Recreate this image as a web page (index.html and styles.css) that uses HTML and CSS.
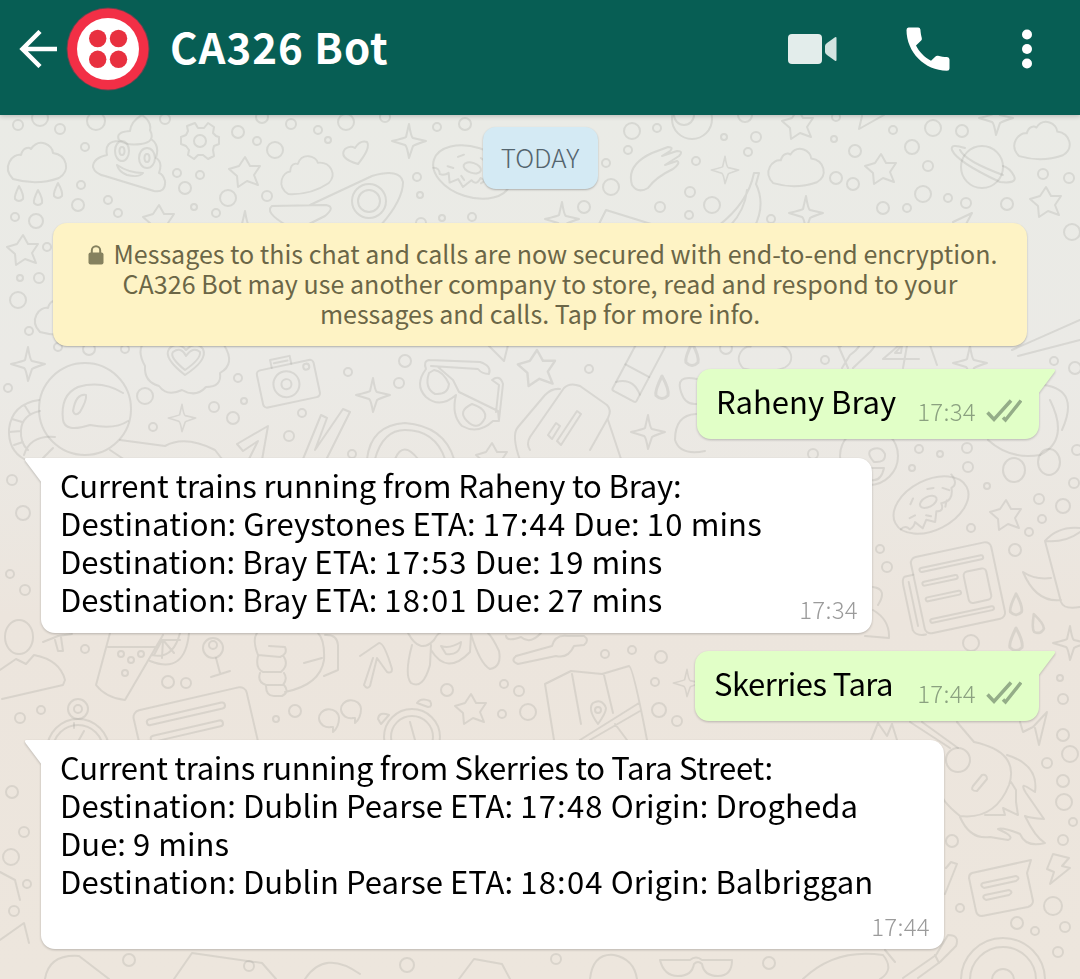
FILE: index.html
```html
<!DOCTYPE html>
<html lang="en">
<head>
<meta charset="utf-8">
<title>CA326 Bot</title>
<link rel="stylesheet" href="styles.css">
</head>
<body>
<div class="app">
<header class="bar">
  <svg class="back" width="38" height="38" viewBox="0 0 38 38"><path d="M21 1.500 3.500 19 21 36.500M3.500 19H38"/></svg>
  <svg class="avatar" width="84" height="84" viewBox="0 0 84 84"><circle cx="42" cy="42" r="41.500" fill="#6a4550"/><circle cx="42" cy="42" r="40.500" fill="#f22f46"/><circle cx="42" cy="42" r="31" fill="#fff"/><g fill="#e8303f"><circle cx="31.700" cy="31.500" r="8.700"/><circle cx="52.500" cy="31.500" r="8.700"/><circle cx="31.700" cy="52.300" r="8.700"/><circle cx="52.500" cy="52.300" r="8.700"/></g></svg>
  <h1 class="name">CA326 Bot</h1>
  <svg class="video" width="50" height="32" viewBox="0 0 50 32"><rect x="1" y="1" width="34" height="30" rx="4" fill="#e3edeb"/><path d="M48 4.200q1.500-.7 1.500.8v22q0 1.500-1.500.8L40 22q-2-1.500-2-3v-6q0-1.500 2-3z" fill="#d3e4e1"/></svg>
  <svg class="phone" width="44" height="44" viewBox="0 0 44 44"><path d="M2.500.5h9.700q2 0 2.200 2c.2 3.200.7 5.800 1.400 8.500q.4 1.500-.6 2.500L10 18.500c3 6 8.200 11.700 15 15.300l4.500-4.300q1-1 2.500-.7c2.800.8 6 1.200 9 1.300q2.500.2 2.500 2.400v9q0 2.300-2.500 2.300C18.500 43.500.5 25 .5 3Q.5.500 2.500.500z" fill="#fff"/></svg>
  <svg class="more" width="12" height="40" viewBox="0 0 12 40"><g fill="#fff"><circle cx="6" cy="5.500" r="5"/><circle cx="6" cy="20" r="5"/><circle cx="6" cy="34.500" r="5"/></g></svg>
</header>
<main class="chat">
<svg class="doodles" viewBox="0 115 1080 864" width="1080" height="864">
  <defs>
    <path id="star" d="M0-15 5-6 15-6 9 3 13 13 2 9-7 15-8 4-16-3-6-6z"/>
    <path id="spark" d="M0-17Q2-4 4-3L17 0Q5 4 4 5L0 17Q-2 5-4 4L-17 0Q-4-3-3-4z"/>
    <path id="cloud" d="M-24 16C-36 4-24-10-16-8-14-16-8-16-6-14 2-26 16-18 16-10 30-8 34 8 22 15Q0 23-24 16z"/>
    <path id="drop" d="M0-8Q-5 2-4 5Q0 9 4 5Q5 1 0-8z"/>
    <g id="donut"><ellipse rx="40" ry="25"/><ellipse cx="-1" cy="-4" rx="9" ry="5"/><path d="M-38 8q6-2 8 4 5 0 8-4l4 9 7-6 7 6 6-9q7 4 8-5 12 4 16-9 8 0 6-12M-18-10l5-4M4-16l6 2M18-10l5 5M16 3l-4 5M-25 2h6M-9 7l4 3"/></g>
    <g id="clock"><circle r="42"/><circle r="33"/><circle r="11"/></g>
    <path id="bolt" d="M-6-15 10-11 3-3 11-1-9 15-5 3-12 0z"/>
  </defs>
  <g class="ink">
    <!-- scattered bubbles -->
    <g>
      <circle cx="18" cy="125" r="5"/><circle cx="40" cy="118" r="8"/><circle cx="60" cy="129" r="5"/><circle cx="96" cy="121" r="9"/><circle cx="85" cy="147" r="4"/><circle cx="165" cy="119" r="5"/><circle cx="238" cy="132" r="6"/><circle cx="257" cy="141" r="4"/><circle cx="275" cy="150" r="8"/><circle cx="262" cy="117" r="6"/><circle cx="291" cy="124" r="5"/><circle cx="318" cy="130" r="4"/><circle cx="328" cy="140" r="3"/><circle cx="346" cy="122" r="8"/><circle cx="385" cy="117" r="5"/><circle cx="437" cy="127" r="4"/><circle cx="465" cy="124" r="6"/><circle cx="177" cy="173" r="4"/><circle cx="200" cy="175" r="4"/><circle cx="185" cy="188" r="6"/><circle cx="81" cy="185" r="4"/><circle cx="78" cy="205" r="6"/><circle cx="108" cy="200" r="4"/><circle cx="118" cy="213" r="4"/><circle cx="228" cy="198" r="8"/><circle cx="267" cy="196" r="5"/><circle cx="194" cy="207" r="3"/><circle cx="216" cy="213" r="4"/><circle cx="15" cy="217" r="4"/><circle cx="417" cy="177" r="4"/><circle cx="420" cy="195" r="3"/><circle cx="421" cy="223" r="5"/><circle cx="442" cy="218" r="3"/><circle cx="472" cy="217" r="4"/>
      <circle cx="632" cy="131" r="8"/><circle cx="657" cy="128" r="4"/><circle cx="628" cy="150" r="4"/><circle cx="606" cy="163" r="4"/><circle cx="696" cy="161" r="4"/><circle cx="724" cy="137" r="3"/><circle cx="756" cy="137" r="5"/><circle cx="748" cy="152" r="4"/><circle cx="834" cy="139" r="3"/><circle cx="855" cy="151" r="6"/><circle cx="893" cy="130" r="4"/><circle cx="933" cy="128" r="8"/><circle cx="912" cy="147" r="7"/><circle cx="962" cy="131" r="6"/><circle cx="928" cy="166" r="5"/><circle cx="836" cy="178" r="6"/><circle cx="853" cy="184" r="6"/><circle cx="611" cy="187" r="8"/><circle cx="584" cy="207" r="6"/><circle cx="660" cy="207" r="5"/><circle cx="690" cy="192" r="5"/><circle cx="712" cy="205" r="8"/><circle cx="689" cy="215" r="4"/><circle cx="771" cy="219" r="4"/><circle cx="883" cy="208" r="6"/><circle cx="907" cy="208" r="4"/><circle cx="923" cy="194" r="8"/><circle cx="948" cy="198" r="4"/><circle cx="966" cy="203" r="5"/><circle cx="1007" cy="204" r="6"/><circle cx="1043" cy="174" r="5"/><circle cx="1069" cy="178" r="5"/><circle cx="836" cy="117" r="4"/><circle cx="745" cy="115" r="7"/><circle cx="1072" cy="232" r="8"/>
      <circle cx="36" cy="221" r="7"/><circle cx="47" cy="247" r="4"/><circle cx="20" cy="278" r="3"/><circle cx="39" cy="278" r="5"/><circle cx="18" cy="300" r="8"/><circle cx="29" cy="331" r="4"/><circle cx="58" cy="347" r="4"/><circle cx="89" cy="349" r="6"/><circle cx="125" cy="349" r="4"/><circle cx="8" cy="388" r="4"/><circle cx="145" cy="396" r="8"/><circle cx="153" cy="427" r="4"/><circle cx="214" cy="407" r="5"/><circle cx="233" cy="418" r="6"/><circle cx="238" cy="378" r="4"/><circle cx="244" cy="401" r="3"/><circle cx="302" cy="413" r="4"/><circle cx="289" cy="436" r="5"/><circle cx="348" cy="372" r="4"/><circle cx="352" cy="454" r="4"/><circle cx="405" cy="361" r="6"/><circle cx="399" cy="383" r="5"/><circle cx="589" cy="369" r="4"/><circle cx="825" cy="360" r="4"/><circle cx="726" cy="348" r="6"/><circle cx="1054" cy="361" r="4"/><circle cx="1075" cy="368" r="6"/>
      <circle cx="919" cy="449" r="4"/><circle cx="940" cy="454" r="3"/><circle cx="967" cy="448" r="5"/><circle cx="968" cy="467" r="5"/><circle cx="912" cy="468" r="3"/><circle cx="987" cy="486" r="3"/><circle cx="1077" cy="450" r="5"/><circle cx="1074" cy="483" r="5"/><circle cx="1039" cy="499" r="5"/><circle cx="1063" cy="506" r="7"/><circle cx="1042" cy="519" r="4"/><circle cx="1029" cy="532" r="4"/><circle cx="971" cy="528" r="4"/><circle cx="1015" cy="550" r="6"/><circle cx="880" cy="549" r="4"/><circle cx="887" cy="567" r="5"/><circle cx="971" cy="643" r="8"/><circle cx="1060" cy="678" r="3"/><circle cx="1063" cy="699" r="5"/><circle cx="813" cy="454" r="5"/>
      <circle cx="85" cy="649" r="4"/><circle cx="168" cy="682" r="6"/><circle cx="186" cy="683" r="5"/><circle cx="20" cy="718" r="5"/><circle cx="41" cy="710" r="4"/><circle cx="276" cy="719" r="3"/><circle cx="295" cy="711" r="6"/><circle cx="447" cy="690" r="6"/><circle cx="504" cy="684" r="4"/><circle cx="519" cy="691" r="5"/><circle cx="502" cy="714" r="4"/><circle cx="528" cy="712" r="8"/><circle cx="605" cy="654" r="4"/><circle cx="632" cy="650" r="4"/><circle cx="661" cy="657" r="6"/><circle cx="655" cy="682" r="4"/><circle cx="659" cy="710" r="7"/><circle cx="677" cy="721" r="5"/>
      <circle cx="1063" cy="735" r="6"/><circle cx="1070" cy="754" r="8"/><circle cx="1047" cy="763" r="5"/><circle cx="1063" cy="781" r="6"/><circle cx="1064" cy="802" r="8"/><circle cx="1073" cy="822" r="4"/><circle cx="1063" cy="840" r="5"/><circle cx="952" cy="841" r="6"/><circle cx="960" cy="908" r="4"/><circle cx="1053" cy="906" r="9"/><circle cx="1017" cy="923" r="6"/><circle cx="1035" cy="931" r="4"/><circle cx="1065" cy="927" r="5"/><circle cx="1058" cy="952" r="5"/><circle cx="12" cy="480" r="5"/><circle cx="23" cy="513" r="7"/><circle cx="10" cy="574" r="4"/><circle cx="25" cy="590" r="5"/><circle cx="12" cy="792" r="6"/><circle cx="24" cy="832" r="5"/><circle cx="11" cy="857" r="8"/><circle cx="27" cy="884" r="4"/><circle cx="14" cy="911" r="5"/><circle cx="129" cy="960" r="6"/><circle cx="249" cy="966" r="5"/><circle cx="407" cy="965" r="7"/><circle cx="556" cy="959" r="5"/><circle cx="769" cy="963" r="6"/>
    </g>
    <!-- stars, sparkles, clouds, drops -->
    <use href="#star" x="245" y="172"/><use href="#star" x="159" y="220"/><use href="#star" x="798" y="124"/><use href="#star" x="881" y="169"/><use href="#star" x="1046" y="202"/><use href="#star" x="23" y="250"/><use href="#star" transform="translate(537 368) scale(1.2)"/><use href="#star" x="492" y="458"/><use href="#star" x="1006" y="515"/><use href="#star" x="471" y="709"/>
    <use href="#spark" x="409" y="141"/><use href="#spark" x="245" y="228"/><use href="#spark" x="562" y="219"/><use href="#spark" transform="translate(725 170) scale(.8)"/><use href="#spark" x="806" y="213"/><use href="#spark" x="996" y="118"/><use href="#spark" x="28" y="364"/><use href="#spark" transform="translate(182 418) scale(.8)"/><use href="#spark" x="373" y="395"/><use href="#spark" x="648" y="432"/><use href="#spark" x="970" y="363"/><use href="#spark" x="1070" y="643"/><use href="#spark" transform="translate(687 683) scale(.8)"/>
    <use href="#cloud" x="37" y="163"/><use href="#cloud" transform="translate(306 175) rotate(-14) scale(.9)"/><use href="#cloud" transform="translate(796 168) scale(.95)"/><use href="#cloud" transform="translate(1042 141) scale(.95)"/><use href="#cloud" transform="translate(64 316)"/><use href="#cloud" transform="translate(765 354) scale(.9)"/>
    <use href="#drop" x="19" y="194"/><use href="#drop" x="38" y="198"/><use href="#drop" x="58" y="191"/><use href="#drop" transform="translate(692 355) scale(1.5)"/><use href="#drop" transform="translate(662 388) scale(1.500)"/><use href="#drop" transform="translate(1016 605) scale(1.400)"/><use href="#drop" transform="translate(1037 624) rotate(-18) scale(1.300)"/><use href="#drop" transform="translate(1016 640) scale(1.500)"/>
    <use href="#donut" transform="translate(472 172) rotate(18)"/><use href="#donut" transform="translate(931 505) rotate(-27)"/>
    <!-- pile with eyes -->
    <path d="M130 131Q131 121 142 115Q152 122 150 130Q156 142 141 144Q126 146 119 140Q115 132 130 131M119 141Q104 141 107 155Q93 158 93 167Q95 174 105 176L154 191Q166 193 165 181Q163 174 159 173Q163 162 156 158Q160 145 151 139M117 165Q129 173 143 173Q139 178 127 175Q119 172 117 165z"/><ellipse cx="122" cy="151" rx="7" ry="10"/><ellipse cx="147" cy="158" rx="8" ry="10"/><ellipse cx="122" cy="151" rx="2.500" ry="4"/><ellipse cx="147" cy="158" rx="2.500" ry="4"/>
    <!-- gear -->
    <circle cx="200" cy="141" r="6"/><path d="M195 123l3 5h6l4-5 6 4-1 6 3 3 3 1v7l-5 2-1 4 1 6-6 3-5-4h-5l-4 4-6-4 1-5-3-4-5-2v-7l5-2 2-4-1-5z"/>
    <path d="M358 164Q338 158 345 149Q350 145 355 148Q360 140 367 142Q371 148 358 164z"/>
    <!-- avocado and halves -->
    <path d="M310 205L372 176Q400 168 403 182Q403 200 381 225M272 206L326 205Q336 207 325 216L305 226M272 206Q264 212 286 225"/><circle cx="369" cy="201" r="17"/><circle cx="369" cy="201" r="11"/>
    <!-- hand, banana, planet -->
    <path d="M632 185Q626 165 652 153L668 147Q674 147 670 151L662 156 677 151Q684 151 679 156L665 165 677 161Q681 163 673 169Q656 177 648 188Q638 194 632 185M718 226Q748 203 754 173H759L756 184Q766 205 754 228M730 226Q745 210 747 190"/>
    <circle cx="982" cy="167" r="21"/><path d="M952 150Q950 143 965 148M952 150Q957 162 1000 182Q1018 184 1014 176Q1010 168 1003 166M960 150Q965 161 1003 175"/>
    <circle cx="692" cy="119" r="20"/><circle cx="684" cy="115" r="10"/><path d="M862 116L859 129 884 115M598 226L606 210 664 228M953 222L972 213 965 226"/>
    <!-- astronaut -->
    <circle cx="85" cy="409" r="46"/><path d="M63 420Q60 395 78 387Q102 380 123 393M63 420Q65 433 90 425Q115 430 128 421M73 411Q76 393 86 395Q87 400 80 412Q75 417 73 411M39 400Q12 404 9 429Q8 450 24 459M40 411Q22 415 21 430Q20 443 28 450M12 419l10 3M9 432l12-1M14 445l9-3M25 406l5 8M24 455Q30 435 55 437M53 448l-10 10M120 440L165 446Q185 435 215 450L222 459M110 450l15 10"/>
    <!-- heart medal -->
    <path d="M145 341Q136 350 145 366Q144 382 159 386Q167 397 182 390Q196 398 206 387Q222 387 220 373Q236 364 224 345M185 375Q163 358 169 349Q177 340 186 350Q196 340 203 349Q208 360 185 375zM185 370Q169 357 173 352Q181 346 186 356Q193 346 200 352Q201 359 185 370z"/>
    <!-- camera -->
    <g transform="rotate(-12 287 382)"><rect x="259" y="365" width="58" height="38" rx="4"/><path d="M275 365v-8h20v8M278 361h14"/><circle cx="286" cy="384" r="13"/><circle cx="286" cy="384" r="5"/><circle cx="309" cy="371" r="3"/></g>
    <path d="M237 444L268 426 262 460M237 444l6 7 15-10-9 18M303 459L321 415 327 418 315 450 343 409 350 412 326 460"/>
    <!-- glasses -->
    <path d="M429 360L480 362Q492 366 489 374Q482 374 478 369L431 366M429 360Q423 361 426 369Q414 385 426 397Q440 409 456 395Q451 415 462 426Q478 435 493 421L499 421 498 411 459 392 453 380 438 367M492 380Q500 374 503 384L499 420M492 380L499 385 496 412M429 373Q424 388 435 394Q448 395 449 384Q443 371 434 370zM472 404Q457 411 467 421Q478 432 485 418Q487 409 472 404z"/>
    <path d="M520 460Q511 435 518 427L545 395Q552 388 560 389M530 450Q526 444 530 437L564 388Q570 382 580 386L607 405Q612 410 608 418L590 450M608 420L621 459M548 435l8-12 4 3-8 13zM557 441L577 411l4 3-20 31z"/>
    <g transform="rotate(28 636 370)"><rect x="624" y="335" width="27" height="64" rx="2"/><path d="M624 370h27M624 390q13-12 27 0"/></g>
    <path d="M367 459Q371 425 405 423Q444 426 454 459M375 459Q383 430 405 430Q435 430 445 459M395 459q8-19 23 0M488 345L504 361 508 345M697 379Q675 374 681 392Q685 405 696 404M696 414Q675 415 675 440Q680 456 705 451M842 368l8-13q14-10 8-15-10-4-18 7M853 368l17-16q8-8 4-12M905 340l-22 19h36M908 340l-5 28M895 353l7-8-1 8zM838 345l10 23M930 345l7 20M1012 350L1080 320M1018 356L1080 340"/>
    <circle cx="869" cy="456" r="29"/><path d="M874 462Q865 452 873 449Q881 446 885 454Q886 463 874 462M869 468h15q-3 14-13 12"/>
    <!-- toy figure -->
    <path d="M1044 385Q1080 390 1062 430M988 440Q1010 460 1040 455Q1070 440 1050 400"/><ellipse cx="1014" cy="470" rx="11" ry="12"/><ellipse cx="1049" cy="462" rx="11" ry="13"/>
    <!-- newspaper -->
    <g transform="rotate(-12 957 588)"><rect x="917" y="549" width="82" height="78" rx="6"/><path d="M917 566h-9q-3 2-3 8v46q2 7 12 7M911 572v45"/><rect x="924" y="561" width="65" height="4" rx="2"/><rect x="924" y="575" width="36" height="4" rx="2"/><rect x="924" y="591" width="36" height="4" rx="2"/><rect x="966" y="574" width="23" height="32" rx="4"/><rect x="924" y="613" width="65" height="4" rx="2"/></g>
    <path d="M1045 541Q1058 526 1080 528M1045 541L1061 602Q1064 610 1080 607M1045 541Q1065 543 1080 532M1051 578Q1035 580 1023 572Q1036 603 1061 600M873 587q15 2 5 18M873 610Q890 620 889 638L865 636"/>
    <!-- lower strip -->
    <ellipse cx="19" cy="637" rx="14" ry="17"/><path d="M0 670L16 659 26 664 34 655Q60 660 65 680L63 685 2 699M43 642l15-6 14-2M55 640l3 11h5l-2-14M110 633L96 685Q106 698 125 700L163 635M108 647h50M150 661Q185 675 189 633M152 655Q173 660 180 633M162 640l-8 15M163 640l11 13M163 640h17M163 640l-1 18"/><circle cx="121" cy="654" r="3"/><circle cx="141" cy="654" r="3"/><circle cx="131" cy="660" r="3"/><circle cx="125" cy="673" r="3"/><circle cx="213" cy="648" r="10"/><circle cx="213" cy="645" r="4"/><path d="M216 658l4 15M211 677l19-6"/>
    <path d="M257 633Q252 640 258 655L280 657Q288 654 285 647L269 646M258 656q-3 12 5 16h18q8-7 3-15M260 673q-3 9 6 12h17q5-6 1-12M266 686q0 10 8 10h8q8-4 2-11M285 692Q320 685 324 660Q325 640 318 633M304 663l18-5M325 635q12-1 13 10v25l-14 6"/>
    <g transform="rotate(-13 195 722)"><rect x="136" y="698" width="116" height="65" rx="7"/><rect x="148" y="709" width="80" height="6" rx="3"/><rect x="148" y="726" width="74" height="6" rx="3"/></g>
    <circle cx="78" cy="750" r="31"/><circle cx="78" cy="750" r="25"/><circle cx="78" cy="709" r="10"/><circle cx="78" cy="709" r="4"/><path d="M84 731l-9 16M74 723v5M331 727a10 9 0 1 1 8-9q0 9-6 14v-5zM353 718a10 9 0 1 1 8-9q0 9-6 14v-5z"/>
    <path d="M360 656L379 643Q384 642 392 669Q392 674 387 672L377 658 370 686Q367 690 364 685L373 658M408 633Q420 655 434 640Q438 633 440 633M412 645Q404 675 411 683Q423 690 430 665L431 645M431 650Q447 676 470 652L471 634Q480 664 490 669Q502 667 499 651Q493 638 488 633M441 646Q450 649 461 642Q460 656 446 654zM506 636Q507 642 521 637Q530 645 541 633M516 656L552 646Q555 634 568 636L584 636Q590 640 584 645L574 646Q568 659 556 656L518 664Q510 661 516 656"/>
    <circle cx="412" cy="737" r="28"/><circle cx="412" cy="737" r="21"/><path d="M410 722l5 18M417 703q4-6 13-2 3 6-2 6zM378 719q1-8 11-4l-8 9zM554 740L545 684 571 671 602 674 629 666Q633 667 647 740M572 674l9 50M604 675l9 38M580 740L639 703M590 740L640 711M615 724l12 16"/><path d="M598 724Q587 709 593 703Q602 698 606 708Q606 713 598 724z"/><circle cx="598" cy="710" r="3"/>
    <!-- guitar and flames -->
    <circle cx="958" cy="760" r="12"/><path d="M871 740l7-17 9 13 5-12 5 16M910 722L950 748M922 722L958 748M957 722L974 742Q1020 752 1009 785Q995 820 960 816Q940 800 940 790M1007 755Q1039 765 1035 792L1027 787Q1020 783 1026 793L1044 819Q1030 818 1025 816M1011 782L1016 790V802L1018 815 1003 808 1005 815 985 815M960 817Q970 840 990 837L1008 840Q1014 838 1006 833L998 829Q1003 827 1020 834Q1026 848 1045 843Q1035 837 1025 816M973 786l9-11q5-1 5 4l-10 12q-7 0-4-5"/>
    <use href="#bolt" x="1059" y="869"/><path d="M1020 722l3 10 10-5 14-15-8 33-4-17"/>
    <path d="M972 873L1022 862 1031 860 1027 873 1033 901Q1033 905 1028 907L982 916Q977 916 976 911L969 878Q969 874 972 873zM983 883l33-7q5 2 0 5l-32 7q-5-3-1-5zM985 895l24-5q5 2 0 5l-23 5q-5-3-1-5zM946 868l5-6 6 2-12 30"/>
    <use href="#clock" x="1003" y="980"/><path d="M903 978L936 955 948 935Q960 935 956 946L940 962 918 978M935 955l4 8M885 950l10 12M0 872l15 8 5 20M0 940l24-17 5 20M45 979q4-25 34-23l30 23M174 979l18-26 70 10 14 16M305 979q20-30 55-5M459 979l15-20 28 5 8 15M590 979q3-26 24-24 20 4 23 24"/><path d="M660 960h30q6-5 12 0h30q0 16-14 16t-16-12q-4-4-8 0-2 12-16 12t-18-16M803 979q32-31 80-24Q895 970 880 979"/>
  </g>
</svg>
<div class="day"><span>TODAY</span></div>
<div class="notice">
  <p class="n1"><svg class="lock" width="16" height="20" viewBox="0 0 16 20"><path d="M3.800 8V5.500a4.200 4.200 0 0 1 8.400 0V8" fill="none" stroke="#85815f" stroke-width="2"/><rect x=".5" y="7.500" width="15" height="12" rx="2" fill="#85815f"/></svg><span>Messages to this chat and calls are now secured with end-to-end encryption.</span></p>
  <p class="n2">CA326 Bot may use another company to store, read and respond to your</p>
  <p class="n3">messages and calls. Tap for more info.</p>
</div>
<div class="msg out first">
  <svg class="tail" width="18" height="30" viewBox="0 0 18 30"><path d="M0 0H15.500Q18 0 16.500 3L0 25z"/></svg>
  <p>Raheny Bray</p><time>17:34</time>
  <svg class="ticks" width="36" height="24" viewBox="0 0 36 24"><path d="M1.500 13.500 8 20.500 25 1.500M17 18.500l2.500 2.500L35 1.500"/></svg>
</div>
<div class="msg in a">
  <svg class="tail" width="18" height="30" viewBox="0 0 18 30"><path d="M18 0H2.500Q0 0 1.500 3L18 25z"/></svg>
  <div class="lines"><p class="l1">Current trains running from Raheny to Bray:</p><p class="l2">Destination: Greystones ETA: <span class="num">17:44</span> Due: <span class="num">10</span> mins</p><p class="l3">Destination: Bray ETA: <span class="num">17:53</span> Due: <span class="num">19</span> mins</p><p class="l3">Destination: Bray ETA: <span class="num">18:01</span> Due: <span class="num">27</span> mins</p></div>
  <time>17:34</time>
</div>
<div class="msg out second">
  <svg class="tail" width="18" height="30" viewBox="0 0 18 30"><path d="M0 0H15.500Q18 0 16.500 3L0 25z"/></svg>
  <p>Skerries Tara</p><time>17:44</time>
  <svg class="ticks" width="36" height="24" viewBox="0 0 36 24"><path d="M1.500 13.500 8 20.500 25 1.500M17 18.500l2.500 2.500L35 1.500"/></svg>
</div>
<div class="msg in b">
  <svg class="tail" width="18" height="30" viewBox="0 0 18 30"><path d="M18 0H2.500Q0 0 1.500 3L18 25z"/></svg>
  <div class="lines"><p class="l4">Current trains running from Skerries to Tara Street:</p><p class="l5">Destination: Dublin Pearse ETA: <span class="num">17:48</span> Origin: Drogheda</p><p class="l6">Due: <span class="num">9</span> mins</p><p class="l5">Destination: Dublin Pearse ETA: <span class="num">18:04</span> Origin: Balbriggan</p></div>
  <time>17:44</time>
</div>
</main>
</div>
</body>
</html>
```
FILE: styles.css
```css
* { box-sizing: border-box; }
body { margin: 0; font-family: "Noto Sans CJK SC", "Noto Sans", sans-serif; }
p, h1 { margin: 0; white-space: nowrap; }
svg { display: block; flex: none; }
.app { width: 1080px; height: 979px; overflow: hidden; display: flex; flex-direction: column; }
.bar { height: 115px; flex: none; background: #075e54; display: flex; align-items: center; padding: 0 47px 18px 19px; position: relative; z-index: 2; box-shadow: 0 1px 5px rgba(0,0,0,.22); }
.back path { fill: none; stroke: #fff; stroke-width: 4.5; }
.avatar { margin-left: 9px; }
.name { margin: 0 0 5px 20px; width: 600px; color: #fff; font-size: 42px; line-height: 60px; font-weight: 700; letter-spacing: 1px; }
.video { margin-left: 17px; }
.phone { margin-left: 69px; }
.more { margin-left: auto; }
.chat { flex: 1; position: relative; z-index: 0; background: linear-gradient(#eaebe6, #ebeae6 30%, #ece5dd 58%, #ede6dd); padding-top: 12px; display: flex; flex-direction: column; }
.doodles { position: absolute; left: 0; top: 0; z-index: -1; }
.ink { fill: none; stroke: rgba(140,142,134,.2); stroke-width: 2; stroke-linejoin: round; stroke-linecap: round; }
.day { align-self: center; width: 115px; height: 62px; border-radius: 13px; background: #d4eaf4; color: #54656e; font-size: 26px; font-weight: 300; line-height: 60px; text-align: center; box-shadow: 0 1px 2px rgba(0,0,0,.25); }
.notice { align-self: center; margin-top: 34px; width: 974px; height: 123px; border-radius: 14px; background: #fef3c5; color: #6b6647; font-size: 25px; line-height: 30px; padding: 15px 0; display: flex; flex-direction: column; align-items: center; box-shadow: 0 1px 2px rgba(0,0,0,.25); }
.n1 { display: flex; align-items: center; gap: 10px; padding-left: 5px; }
.lock { margin-top: 3px; }
.n2 { letter-spacing: .04px; }
.msg { position: relative; border-radius: 14px; font-size: 31px; line-height: 38px; color: #000; filter: drop-shadow(0 1px 1px rgba(0,0,0,.22)); }
.msg time { font-size: 24px; line-height: 28px; font-weight: 300; letter-spacing: .3px; }
.tail { position: absolute; top: 0; }
.out { align-self: flex-end; margin-right: 41px; height: 70px; background: #e1ffc7; display: flex; padding: 13px 17px 0 19px; border-top-right-radius: 0; }
.out .tail { left: calc(100% - 1px); fill: #e1ffc7; }
.out time { margin: 15px 0 0 auto; color: #8ba180; }
.ticks { margin: 17px 0 0 10px; }
.ticks path { fill: none; stroke: #94ad88; stroke-width: 3.5; }
.first { width: 342px; margin-top: 23px; }
.second { width: 344px; margin-top: 18px; }
.second p { letter-spacing: -.5px; }
.in { margin-left: 41px; background: #fff; border-top-left-radius: 0; padding: 8px 14px 0 19px; display: flex; flex-direction: column; }
.in .tail { right: calc(100% - 1px); fill: #fff; }
.in time { align-self: flex-end; color: #9b9b9b; }
.a { width: 831px; height: 175px; margin-top: 19px; }
.b { width: 903px; height: 209px; margin-top: 19px; }
.a time { margin-top: -23px; }
.b time { margin-top: 12px; }
.num { letter-spacing: 1.2px; }
.l1 { letter-spacing: -.16px; }
.l2 { letter-spacing: .11px; }
.l3 { letter-spacing: .02px; }
.l4 { letter-spacing: -.29px; }
.l5 { letter-spacing: .08px; }
```
